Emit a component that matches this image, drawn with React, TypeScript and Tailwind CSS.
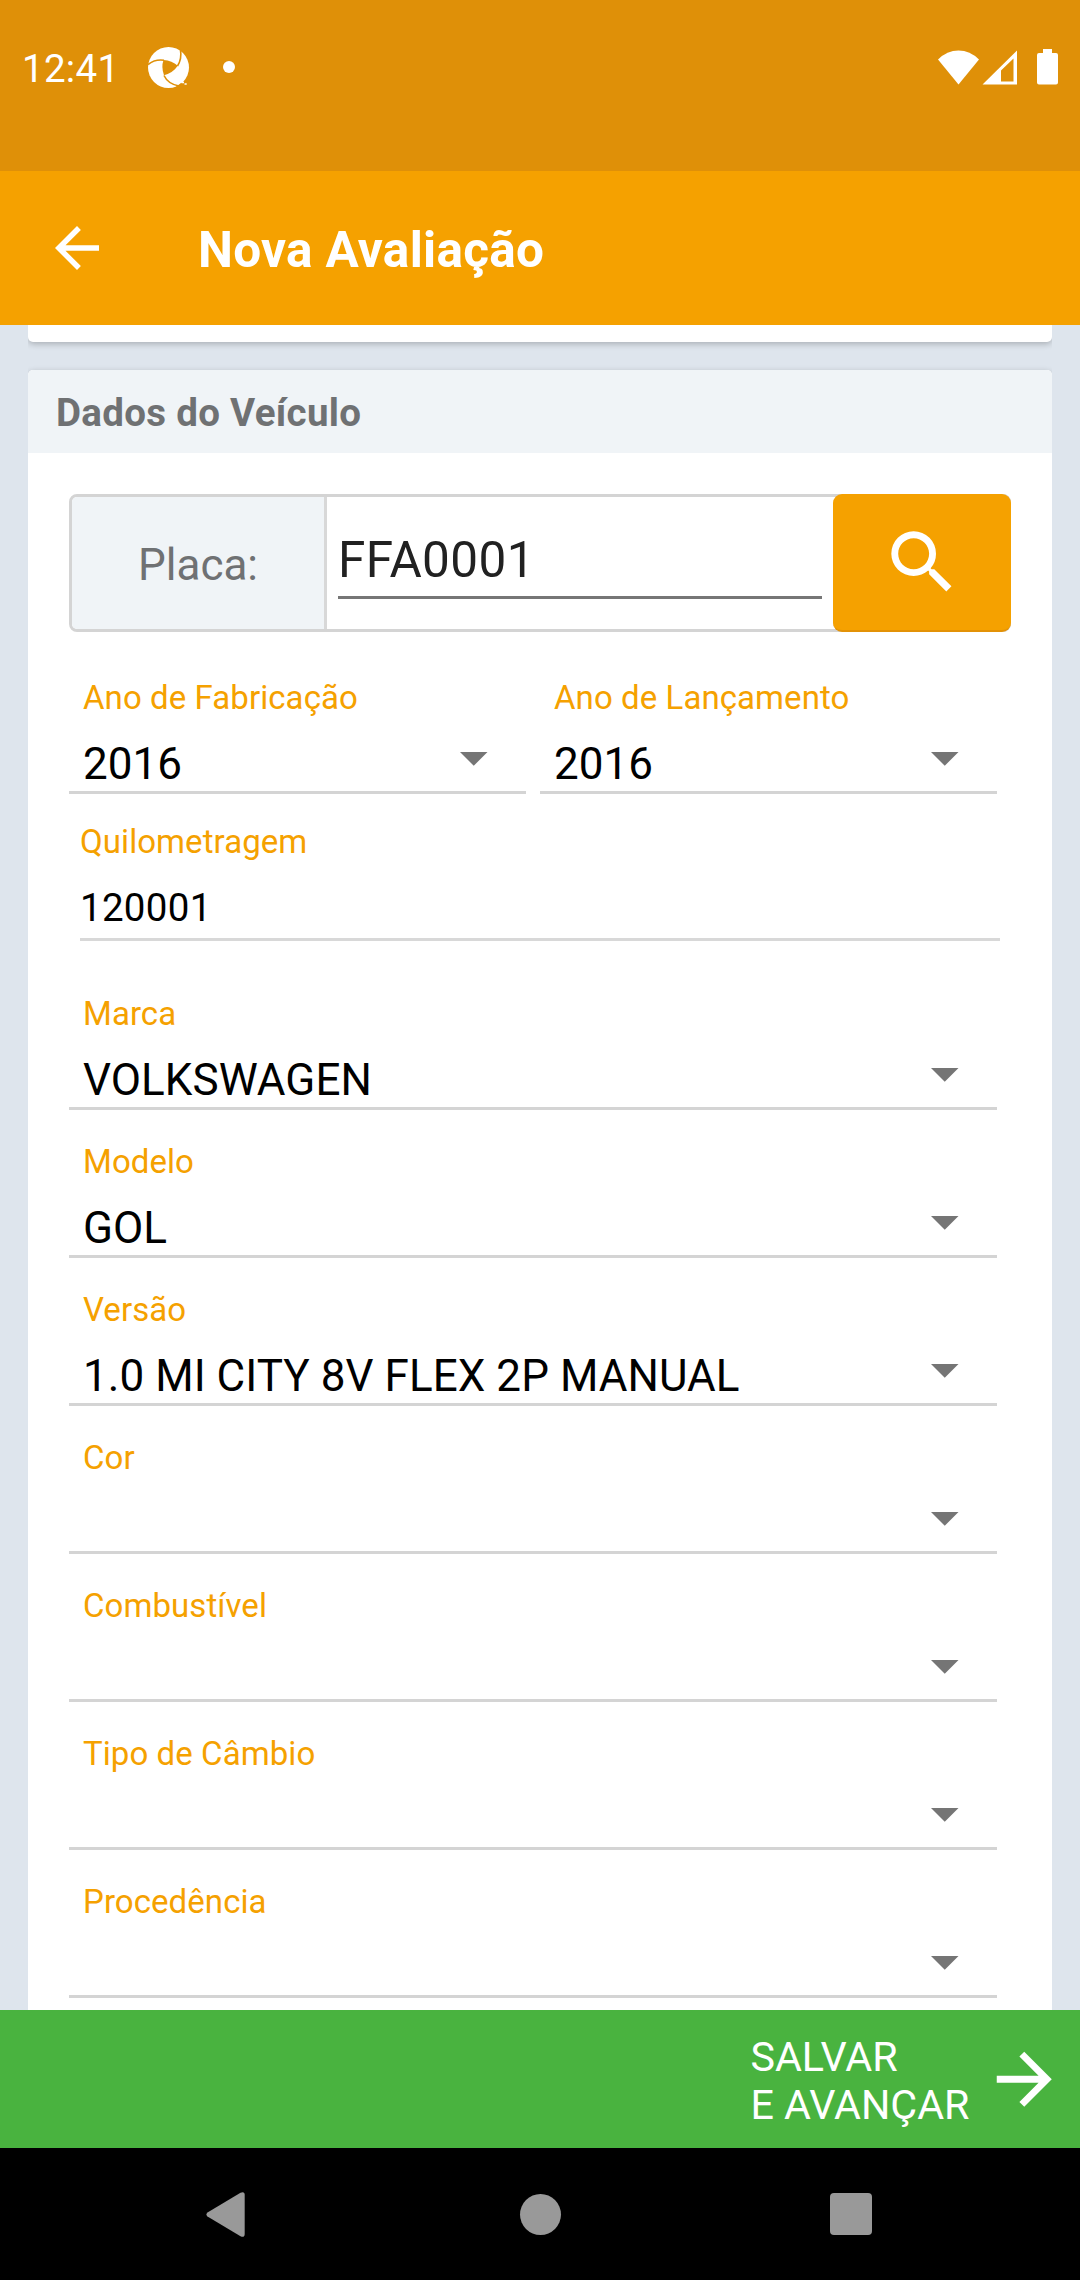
import type { ReactNode } from "react";

function Caret() {
  return (
    <svg width="28" height="14" viewBox="0 0 28 14" className="block shrink-0">
      <path d="M0 0h27.5L13.75 13.75z" fill="#757575" />
    </svg>
  );
}

function SelectField({ label, value = "" }: { label: string; value?: string }) {
  return (
    <div className="flex h-[148px] w-full min-w-0 flex-col border-b-[3px] border-[#d4d4d4] pt-[33px] pr-[38px] pl-[14px]">
      <div className="h-[38px] text-[33px] leading-[38px] tracking-[0.07px] text-[#f5a100]">{label}</div>
      <div className="mt-[21px] flex h-[52px] items-start justify-between">
        <span className="text-[44px] leading-[52px] tracking-[0.05px] text-black">{value}</span>
        <span className="pt-[14px]">
          <Caret />
        </span>
      </div>
    </div>
  );
}

function StatusBar() {
  return (
    <header className="flex h-[171px] shrink-0 items-start bg-[#df9008] text-white">
      <div className="mt-[46px] ml-[22px] w-[126px] text-[38.5px] leading-[46px] tracking-[0.3px]">12:41</div>
      <svg width="42" height="41" viewBox="0 0 42 41" className="mt-[47px]">
        <circle cx="20.5" cy="20.5" r="20.5" fill="#fff" />
        <path d="M27 40.500L33 36L42 34V41H27z" fill="#df9008" />
        <path d="M33.500 35.500h2.500M36.500 37h2.200" stroke="#fff" strokeWidth="1.400" />
        <g fill="none" stroke="#df9008" strokeWidth="1.600">
          <path d="M0 17.500Q7 12 16 13.300" />
          <path d="M16 28.500Q20 37 31 39" />
          <path d="M32.500 3Q34 12 29.500 19" />
        </g>
        <path d="M15.500 13Q24 13.500 29.800 18.800Q25 26 16 28.200Q13 20 15.500 13z" fill="#df9008" />
      </svg>
      <div className="mt-[61px] ml-[33px] size-3 rounded-full bg-white" />
      <div className="mt-[49px] ml-auto flex pr-[22px]">
        <svg width="120" height="36" viewBox="0 0 120 36" fill="#fff">
          <path d="M0 10.500Q9 1.500 20.500 1.500T41 10.500L20.500 35.500z" />
          <path fillRule="evenodd" d="M44.500 35.500L79 1.500V35.500zM63 21.500V32.500H75.500V9.500z" />
          <path d="M105 0h9v4h4a2 2 0 0 1 2 2v27.500a2 2 0 0 1-2 2h-17a2 2 0 0 1-2-2V6a2 2 0 0 1 2-2h4z" />
        </svg>
      </div>
    </header>
  );
}

function AppBar() {
  return (
    <div className="flex h-[154px] shrink-0 items-center bg-[#f5a100] pl-[44px] text-white">
      <svg width="66" height="66" viewBox="0 0 24 24" fill="currentColor">
        <path d="M20 11H7.830l5.590-5.590L12 4l-8 8 8 8 1.410-1.410L7.830 13H20v-2z" />
      </svg>
      <h1 className="mt-[4px] ml-[88px] text-[49.500px] leading-[58px] font-bold tracking-[0.3px]">Nova Avaliação</h1>
    </div>
  );
}

function PlateRow() {
  return (
    <div className="flex h-[138px] w-[942px] rounded-[8px] border-[3px] border-[#d4d4d4] bg-white">
      <div className="flex w-[255px] items-center justify-center rounded-l-[5px] border-r-[3px] border-[#d8d8d8] bg-[#f0f4f7] pt-[3px] text-[44px] text-[#6f7173]">
        Placa:
      </div>
      <div className="flex flex-1 flex-col px-[11px] pt-[34px]">
        <div className="h-[68px] border-b-[3px] border-[#767676] text-[49.500px] leading-[58px] tracking-[0.4px] text-[#212121]">
          FFA0001
        </div>
      </div>
      <button className="-my-[3px] -mr-[3px] flex w-[178px] items-center justify-center rounded-[9px] border-b-2 border-[#e39207] bg-[#f5a100]">
        <svg width="82.5" height="82.5" viewBox="0 0 24 24" fill="#fff">
          <path d="M15.500 14h-.790l-.280-.270A6.471 6.471 0 0 0 16 9.500 6.500 6.500 0 1 0 9.500 16c1.610 0 3.090-.590 4.230-1.570l.270.280v.790l5 4.990L20.490 19l-4.990-5zm-6 0C7.010 14 5 11.990 5 9.500S7.010 5 9.500 5 14 7.010 14 9.500 11.990 14 9.500 14z" />
        </svg>
      </button>
    </div>
  );
}

function Card({ children, className }: { children?: ReactNode; className: string }) {
  return (
    <section className={`mx-[28px] shadow-[0_2px_6px_rgba(0,0,0,0.24)] [clip-path:inset(-12px_0)] ${className}`}>
      {children}
    </section>
  );
}

export default function App() {
  return (
    <div className="flex h-[2280px] w-[1080px] flex-col overflow-hidden bg-[#dee5ed] font-['Roboto',sans-serif]">
      <StatusBar />
      <AppBar />
      <main className="flex h-[1685px] shrink-0 flex-col overflow-hidden">
        <Card className="h-[17px] shrink-0 rounded-b-[5px] bg-white" />
        <Card className="mt-[28px] h-[1700px] shrink-0 overflow-hidden rounded-t-[5px] bg-white">
          <h2 className="h-[83px] bg-[#f0f4f7] pt-[20px] pl-[28px] text-[38.500px] leading-[46px] font-bold tracking-[0.3px] text-[#6f7173]">
            Dados do Veículo
          </h2>
          <div className="px-[41px] pt-[41px]">
            <PlateRow />
            <div className="mt-[14px] flex w-[928px] gap-[14px]">
              <SelectField label="Ano de Fabricação" value="2016" />
              <SelectField label="Ano de Lançamento" value="2016" />
            </div>
            <div className="mr-[11px] ml-[11px] flex h-[147px] w-[920px] flex-col border-b-[3px] border-[#d8d8d8] pt-[29px]">
              <div className="h-[38px] text-[33px] leading-[38px] tracking-[0.07px] text-[#f5a100]">Quilometragem</div>
              <div className="mt-[24px] text-[38.500px] leading-[46px] tracking-[0.3px] text-black">120001</div>
            </div>
            <div className="mt-[21px] flex w-[928px] flex-col">
              <SelectField label="Marca" value="VOLKSWAGEN" />
              <SelectField label="Modelo" value="GOL" />
              <SelectField label="Versão" value="1.0 MI CITY 8V FLEX 2P MANUAL" />
              <SelectField label="Cor" />
              <SelectField label="Combustível" />
              <SelectField label="Tipo de Câmbio" />
              <SelectField label="Procedência" />
            </div>
          </div>
        </Card>
      </main>
      <button className="flex h-[138px] shrink-0 items-center justify-end bg-[#49b33f] pr-[15px] text-left text-white">
        <span className="pt-[4px] text-[41.250px] leading-[48px]">
          SALVAR
          <br />E AVANÇAR
        </span>
        <svg width="82.5" height="82.5" viewBox="0 0 24 24" fill="currentColor" className="ml-[13px]">
          <path d="M12 4l-1.410 1.410L16.170 11H4v2h12.170l-5.580 5.590L12 20l8-8z" />
        </svg>
      </button>
      <nav className="flex h-[132px] shrink-0 items-center bg-black pl-[206px]">
        <svg width="39" height="45" viewBox="0 0 39 45" fill="#999">
          <path d="M34.500.700Q38.700-1 38.700 3V42Q38.700 46 34.500 44.300L1.500 24.500Q-.700 22.500 1.500 20.500z" />
        </svg>
        <div className="ml-[274.500px] size-[41px] rounded-full bg-[#999]" />
        <div className="ml-[269.500px] size-[41.500px] rounded-[4px] bg-[#999]" />
      </nav>
    </div>
  );
}
